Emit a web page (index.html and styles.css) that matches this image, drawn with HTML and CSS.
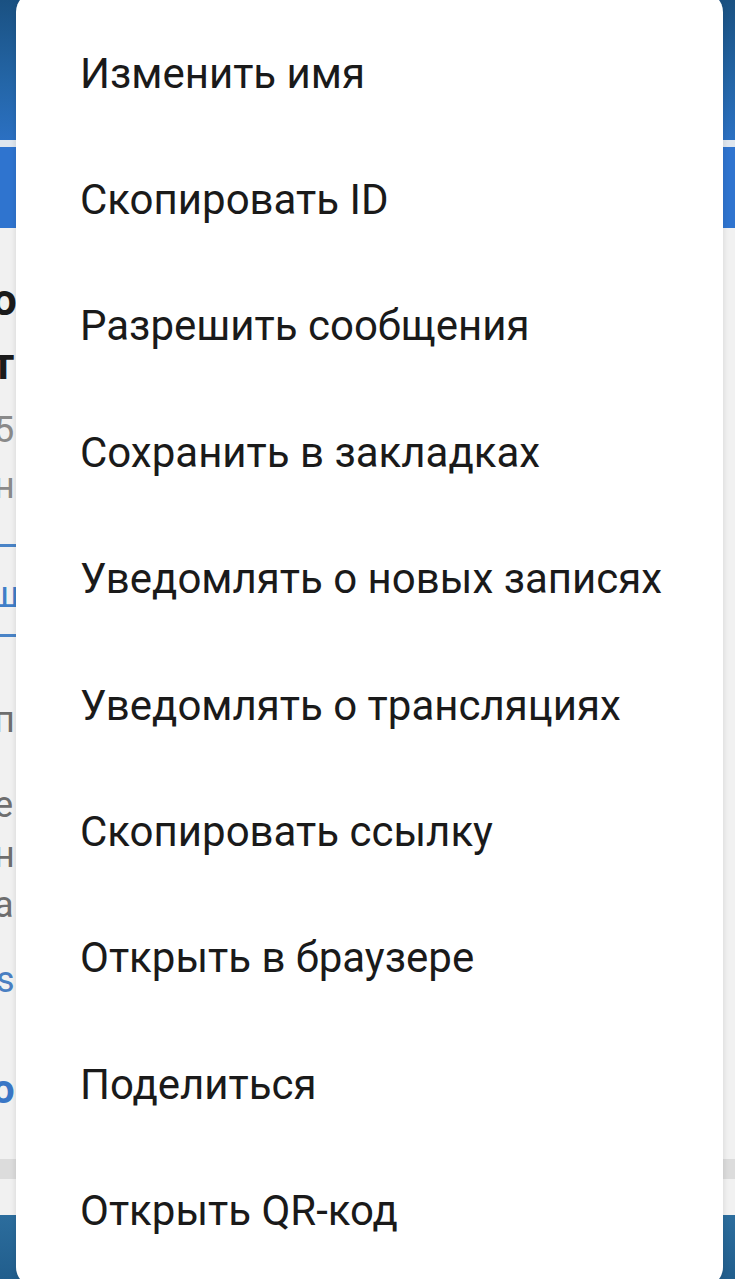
FILE: index.html
```html
<!DOCTYPE html>
<html lang="ru">
<head>
<meta charset="utf-8">
<link rel="stylesheet" href="styles.css">
</head>
<body>
<div class="screen">
  <div class="header">
    <div class="header-top"></div>
    <div class="header-sep"></div>
    <div class="header-bottom"></div>
  </div>
  <div class="content">
    <div class="title t1">о</div>
    <div class="title">т</div>
    <div class="meta m1">5</div>
    <div class="meta">н</div>
    <div class="tab-line l1"></div>
    <div class="tab">ш</div>
    <div class="tab-line l2"></div>
    <div class="para p1">п</div>
    <div class="para p2">е</div>
    <div class="para">н</div>
    <div class="para">а</div>
    <div class="link">s:</div>
    <div class="link-bold">о</div>
    <div class="bar"></div>
  </div>
  <div class="footer"></div>

  <div class="menu">
    <div class="item">Изменить имя</div>
    <div class="item">Скопировать ID</div>
    <div class="item">Разрешить сообщения</div>
    <div class="item">Сохранить в закладках</div>
    <div class="item">Уведомлять о новых записях</div>
    <div class="item">Уведомлять о трансляциях</div>
    <div class="item">Скопировать ссылку</div>
    <div class="item">Открыть в браузере</div>
    <div class="item">Поделиться</div>
    <div class="item">Открыть QR-код</div>
  </div>
</div>
</body>
</html>
```

FILE: styles.css
```css
html, body {
  margin: 0;
  padding: 0;
}
body {
  width: 735px;
  height: 1279px;
  overflow: hidden;
  font-family: Roboto, "Noto Sans", sans-serif;
  background: #efefef;
}
.screen {
  position: relative;
  width: 735px;
  height: 1279px;
  overflow: hidden;
  display: flex;
  flex-direction: column;
}
.header {
  display: flex;
  flex-direction: column;
}
.header-top {
  height: 140px;
  background: linear-gradient(180deg, #1a5182 0%, #2466a8 60%, #2b70c2 100%);
}
.header-sep {
  height: 7px;
  background: #dfe6ee;
}
.header-bottom {
  height: 81px;
  background: #2f74cf;
}
.content {
  flex: 1;
  background: #f1f1f1;
  display: flex;
  flex-direction: column;
}
.title {
  font-size: 44px;
  font-weight: 700;
  color: #1b1b1b;
  line-height: 64px;
  margin-left: -8px;
}
.t1 {
  margin-top: 40px;
}
.meta {
  font-size: 36px;
  color: #8a8a8a;
  line-height: 56px;
  margin-left: -6px;
}
.m1 {
  margin-top: 6px;
}
.tab-line {
  height: 3px;
  background: #4a84c7;
  width: 30px;
}
.l1 {
  margin-top: 30px;
}
.l2 {
  margin-top: 19px;
}
.tab {
  font-size: 36px;
  color: #3f7ec8;
  line-height: 40px;
  margin-top: 28px;
  margin-left: -10px;
}
.para {
  font-size: 36px;
  color: #6e6e6e;
  line-height: 50px;
  margin-left: -6px;
}
.p1 {
  margin-top: 58px;
}
.p2 {
  margin-top: 35px;
}
.link {
  font-size: 36px;
  color: #4a7fc2;
  line-height: 50px;
  margin-top: 25px;
  margin-left: -4px;
}
.link-bold {
  font-size: 40px;
  font-weight: 700;
  color: #3a77c6;
  line-height: 50px;
  margin-top: 60px;
  margin-left: -8px;
}
.bar {
  height: 20px;
  background: #dcdcdc;
  margin-top: 44px;
}
.footer {
  height: 64px;
  background: linear-gradient(180deg, #2c6d9d, #215e8d);
}
.menu {
  position: absolute;
  left: 16px;
  top: -8px;
  width: 707px;
  height: 1295px;
  box-sizing: border-box;
  background: #ffffff;
  border-radius: 20px;
  box-shadow: 0 2px 6px rgba(0, 0, 0, 0.12);
  padding: 18px 0 13px;
  display: flex;
  flex-direction: column;
}
.item {
  height: 126.4px;
  display: flex;
  align-items: center;
  padding-left: 64px;
  font-size: 42px;
  color: #1a1a1a;
}
```
